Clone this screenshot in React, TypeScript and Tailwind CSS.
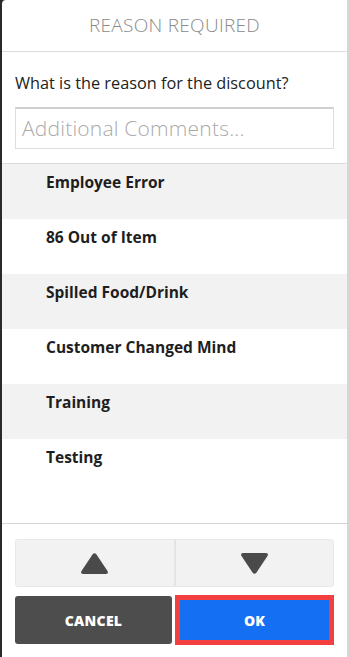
import React from 'react';

const reasons = [
  'Employee Error',
  '86 Out of Item',
  'Spilled Food/Drink',
  'Customer Changed Mind',
  'Training',
  'Testing',
];

const font = { fontFamily: '"Open Sans", "Liberation Sans", sans-serif' };

export default function App() {
  return (
    <div className="w-[349px] h-[657px] bg-[#2a2a2a] flex" style={font}>
      <div className="ml-[2px] w-[347px] h-full bg-white rounded-tl-[4px] border-r-2 border-[#d6d6d6] flex flex-col">
        {/* header */}
        <div className="h-[52px] shrink-0 flex items-center justify-center border-b border-[#dcdcdc]">
          <span className="text-[19px] text-[#8a8a8a] font-light tracking-[0.3px]">REASON REQUIRED</span>
        </div>
        <div className="px-[13px] pt-[20px] h-[112px] shrink-0 border-b border-[#dcdcdc]">
          <p className="text-[16.3px] text-[#222] leading-[22px]">What is the reason for the discount?</p>
          <div className="mt-[13px] h-[42px] border border-[#dedede] border-t-2 border-t-[#cfcfcf] flex items-center px-[6px]">
            <span className="text-[21px] text-[#aaaaaa] font-light tracking-[0.2px]">Additional Comments...</span>
          </div>
        </div>
        {/* reasons list */}
        <div className="h-[360px] shrink-0 flex flex-col border-b border-[#d6d6d6]">
          {reasons.map((r, i) => (
            <div
              key={r}
              className={`h-[55px] shrink-0 pl-[44px] pt-[6px] ${i % 2 === 0 ? 'bg-[#f2f2f2]' : 'bg-white'}`}
            >
              <span className="text-[15.5px] font-bold text-[#1e1e1e]">{r}</span>
            </div>
          ))}
        </div>
        {/* buttons */}
        <div className="px-[13px] pt-[15px] flex flex-col gap-[8px]">
          <div className="h-[48px] flex bg-[#f2f2f2] rounded-[3px] border border-[#e8e8e8]">
            <button className="flex-1 flex items-center justify-center border-r-2 border-[#e4e4e4]">
              <svg width="29" height="23" viewBox="0 0 29 23">
                <path d="M12.5 2.5 Q14.5 0 16.5 2.5 L27.5 19 Q29 22 25.5 22 L3.5 22 Q0 22 1.5 19 Z" fill="#4a4a4a" />
              </svg>
            </button>
            <button className="flex-1 flex items-center justify-center">
              <svg width="29" height="23" viewBox="0 0 29 23">
                <path d="M12.5 20.5 Q14.5 23 16.5 20.5 L27.5 4 Q29 1 25.5 1 L3.5 1 Q0 1 1.5 4 Z" fill="#4a4a4a" />
              </svg>
            </button>
          </div>
          <div className="h-[50px] flex gap-[3px]">
            <button className="w-[157px] h-[48px] mt-[1px] bg-[#4d4d4d] rounded-[3px] text-white text-[14px] font-extrabold tracking-[0.3px]">
              CANCEL
            </button>
            <button className="flex-1 h-[50px] bg-[#156ff2] border-[5px] border-[#f23f3f] text-white text-[14px] font-extrabold">
              OK
            </button>
          </div>
        </div>
      </div>
    </div>
  );
}
